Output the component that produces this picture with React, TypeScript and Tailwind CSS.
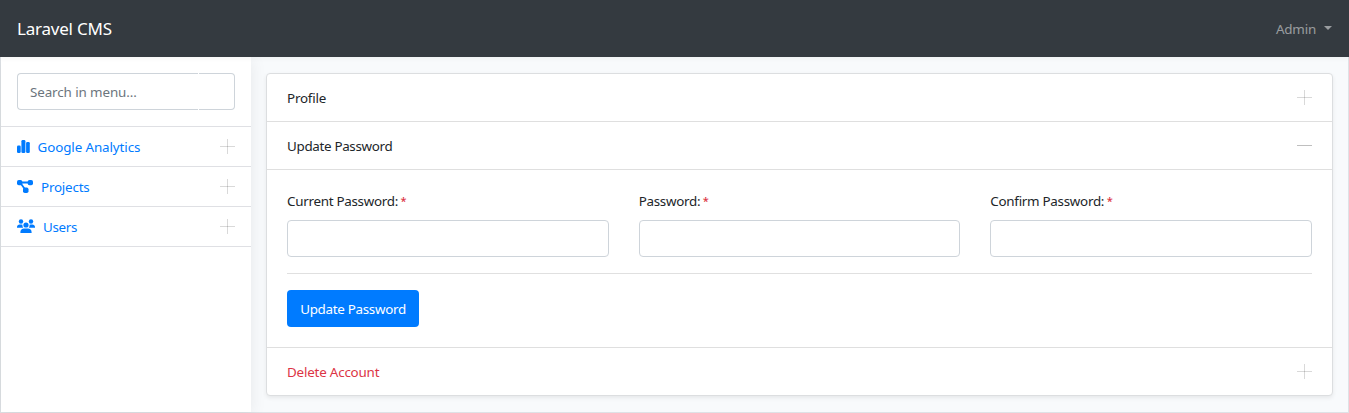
import type { ReactNode } from "react";

function Toggle({ open = false }: { open?: boolean }) {
  return (
    <svg className="block size-[15px] shrink-0" viewBox="0 0 15 15" shapeRendering="crispEdges">
      <rect x="0" y="7" width="15" height="1" fill="#000" fillOpacity={open ? 0.25 : 0.15} />
      {!open && <rect x="7" y="0" width="1" height="15" fill="#000" fillOpacity="0.15" />}
    </svg>
  );
}

function ChartIcon() {
  return (
    <svg className="h-[15px] w-[13px] shrink-0" viewBox="0 0 13 15" fill="currentColor">
      <rect x="0" y="6.6" width="3.7" height="7.4" rx="1.2" />
      <rect x="4.4" y="1" width="4" height="13" rx="1.3" />
      <rect x="9.1" y="3" width="3.7" height="11" rx="1.2" />
    </svg>
  );
}

function ProjectIcon() {
  return (
    <svg className="h-[15px] w-4 shrink-0" viewBox="0 0 16 15" fill="currentColor">
      <rect x="0" y="0.9" width="5.3" height="5.3" rx="1.8" />
      <rect x="10.7" y="0.9" width="5.3" height="5.3" rx="1.8" />
      <rect x="6" y="8.5" width="5.5" height="5.5" rx="1.8" />
      <path d="M4 3.5H12M3.8 4.5L7.6 9.8" stroke="currentColor" strokeWidth="1.8" />
    </svg>
  );
}

function UsersIcon() {
  return (
    <svg className="h-[15px] w-[18px] shrink-0" viewBox="0 0 18 15" fill="currentColor">
      <circle cx="4" cy="2.5" r="2.2" />
      <circle cx="14" cy="2.5" r="2.2" />
      <circle cx="9" cy="6" r="2.6" />
      <path d="M0 8.8V8C0 6.5 1.2 5.5 2.7 5.5H4.3Q5 5.5 5.4 5.8Q5.2 7.5 6.2 8.8Z" />
      <path d="M18 8.8V8C18 6.5 16.8 5.5 15.3 5.5H13.7Q13 5.5 12.6 5.8Q12.8 7.5 11.8 8.8Z" />
      <path d="M3.4 14V13C3.4 10.9 5 9.5 7 9.5H11C13 9.5 14.6 10.9 14.6 13V14Z" />
    </svg>
  );
}

function MenuItem({ icon, label, tracking }: { icon: ReactNode; label: string; tracking: string }) {
  return (
    <a className="flex h-10 items-center border-b border-[#dfe0e4] px-4 text-[#007bff]">
      {icon}
      <span className={`mt-px grow ${tracking}`}>{label}</span>
      <Toggle />
    </a>
  );
}

function Field({ label }: { label: string }) {
  return (
    <label className="flex flex-col">
      <span className="h-[30px] leading-[22px] tracking-[-0.28px]">
        {label}:<span className="ml-[2.5px] align-[1px] text-[11px] leading-none font-medium text-[#dc3545]">*</span>
      </span>
      <input type="password" className="h-[37px] w-full rounded-[4px] border border-[#ced4da] bg-white" />
    </label>
  );
}

export default function App() {
  return (
    <div className="flex h-[413px] flex-col bg-[#f8fafc] font-['Noto_Sans','Open_Sans',sans-serif] text-[13.4px] tracking-[-0.2px] text-[#212529]">
      <header className="z-10 flex h-[57px] shrink-0 items-center justify-between bg-[#343a40] px-[17px] shadow-[0_2px_4px_rgba(0,0,0,0.04)]">
        <span className="text-[17px] tracking-[-0.22px] text-white">Laravel CMS</span>
        <span className="mt-px flex items-center text-white/50">
          Admin
          <span className="mb-[2px] ml-2 h-0 w-0 border-x-4 border-t-4 border-x-transparent border-t-white/50" />
        </span>
      </header>
      <div className="flex grow border-x border-b border-[#dee2e6]">
        <aside className="z-1 w-[250px] shrink-0 bg-white shadow-[0_2px_16px_rgba(0,0,0,0.075)]">
          <div className="flex h-[70px] border-b border-[#dfe0e4] px-4 pt-4">
            <input
              placeholder="Search in menu..."
              className="h-[37px] w-[181px] rounded-l-[4px] border border-r-0 border-[#ced4da] bg-white pl-3 tracking-[-0.1px] placeholder:text-[#6c757d]"
            />
            <span className="ml-[0.5px] h-[37px] grow rounded-r-[4px] border border-l-0 border-[#ced4da]" />
          </div>
          <nav>
            <MenuItem icon={<ChartIcon />} label="Google Analytics" tracking="ml-[7.5px] tracking-[-0.1px]" />
            <MenuItem icon={<ProjectIcon />} label="Projects" tracking="ml-2 tracking-[-0.2px]" />
            <MenuItem icon={<UsersIcon />} label="Users" tracking="ml-2 tracking-[-0.3px]" />
          </nav>
        </aside>
        <main className="grow px-[15px] pt-4">
          <section className="rounded-[4px] border border-[#dcdee0] bg-white shadow-[0_2px_4px_rgba(0,0,0,0.075)]">
            <div className="flex h-12 items-center justify-between border-b border-[#dfdfdf] px-5">
              <span className="pt-[2px]">Profile</span>
              <Toggle />
            </div>
            <div className="flex h-12 items-center justify-between border-b border-[#dfdfdf] px-5">
              <span className="pt-[2px] tracking-[-0.32px]">Update Password</span>
              <Toggle open />
            </div>
            <div className="h-[178px] border-b border-[#dfdfdf] px-5 pt-5">
              <div className="grid grid-cols-3 gap-[30px]">
                <Field label="Current Password" />
                <Field label="Password" />
                <Field label="Confirm Password" />
              </div>
              <hr className="my-4 border-t border-[#e0e0e0]" />
              <button className="h-[37px] w-[132px] rounded-[4px] bg-[#007bff] pt-[2px] tracking-[-0.3px] text-white">
                Update Password
              </button>
            </div>
            <div className="flex h-[47px] items-center justify-between px-5 text-[#dc3545]">
              <span className="pt-[2px]">Delete Account</span>
              <Toggle />
            </div>
          </section>
        </main>
      </div>
    </div>
  );
}
